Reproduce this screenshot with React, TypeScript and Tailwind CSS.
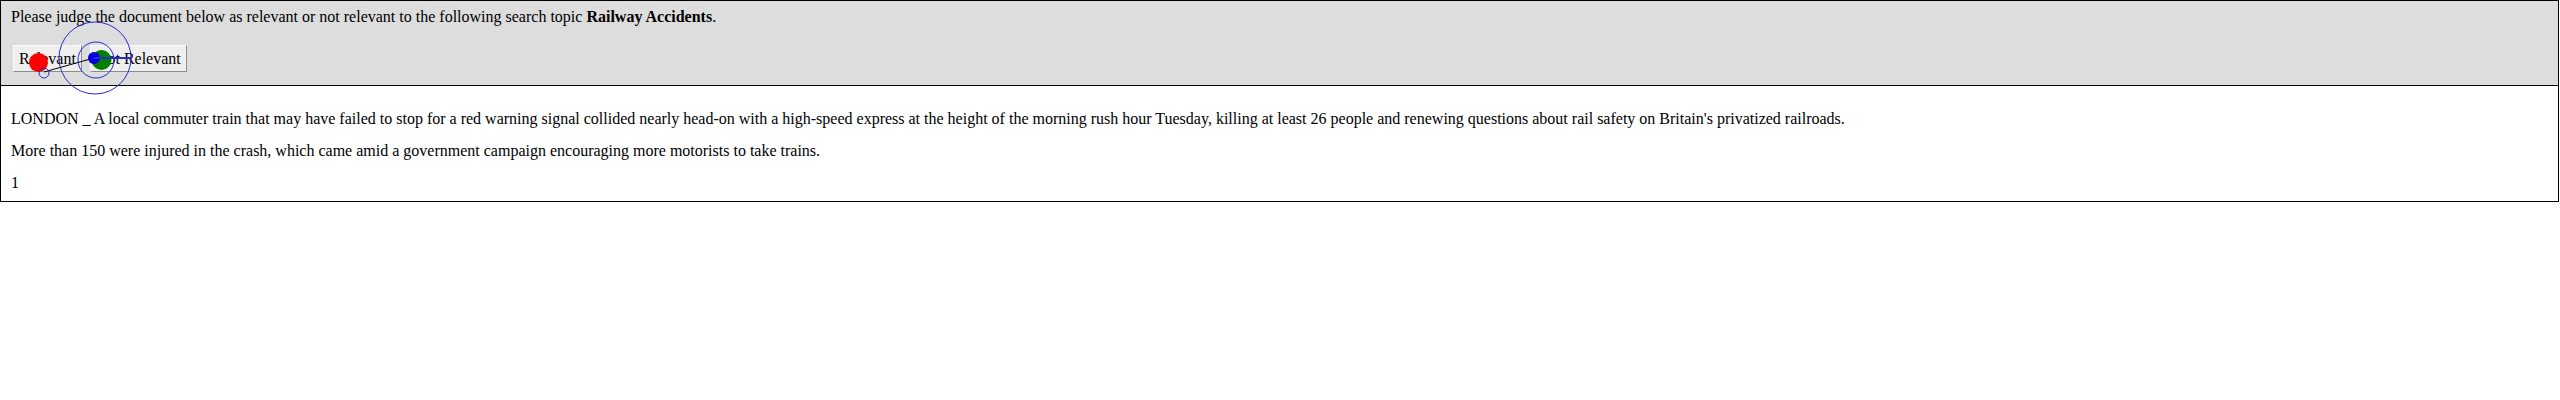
import React from "react";

export default function App() {
  return (
    <div className="relative w-[2559px] font-['Liberation_Serif',serif] text-[16px] leading-[18px] text-black">
      <div className="border border-black">
        <div className="bg-[#dddddd] border-b border-black pl-[10px] pt-[7px] pb-[13px]">
          <div>
            Please judge the document below as relevant or not relevant to the following search topic{" "}
            <b>Railway Accidents</b>.
          </div>
          <div className="mt-[19px] ml-[2px] flex gap-[8px]">
            <button className="h-[27px] px-[5px] bg-[#efefef] border border-t-[#fafafa] border-l-[#fafafa] border-b-[#8c8c8c] border-r-[#8c8c8c] font-['Liberation_Serif',serif] text-[16px] leading-[18px]">
              Relevant
            </button>
            <button className="h-[27px] px-[5px] bg-[#efefef] border border-t-[#fafafa] border-l-[#fafafa] border-b-[#8c8c8c] border-r-[#8c8c8c] font-['Liberation_Serif',serif] text-[16px] leading-[18px]">
              Not Relevant
            </button>
          </div>
        </div>
        <div className="bg-white pl-[10px] pt-[24px] pb-[9px] flex flex-col gap-[14px]">
          <p>
            LONDON _ A local commuter train that may have failed to stop for a red warning signal collided nearly head-on with a high-speed express at the height of the morning rush hour Tuesday, killing at least 26 people and renewing questions about rail safety on Britain's privatized railroads.
          </p>
          <p>
            More than 150 were injured in the crash, which came amid a government campaign encouraging more motorists to take trains.
          </p>
          <p>1</p>
        </div>
      </div>
      <svg
        className="absolute left-0 top-0 pointer-events-none overflow-visible"
        width="200"
        height="110"
        viewBox="0 0 200 110"
      >
        <circle cx="95" cy="58" r="36" fill="none" stroke="#2b2bd0" strokeWidth="1" />
        <circle cx="96" cy="60" r="18" fill="none" stroke="#2b2bd0" strokeWidth="1" />
        <circle cx="101.5" cy="60" r="10" fill="#008000" />
        <line x1="44" y1="72" x2="94" y2="58" stroke="#000" strokeWidth="1" />
        <circle cx="94" cy="58" r="6" fill="#0000e0" />
        <line x1="94" y1="58" x2="132" y2="58" stroke="#2b2bd0" strokeWidth="2" />
        <circle cx="38.5" cy="62.5" r="9.5" fill="#ff0000" />
        <circle cx="44" cy="73" r="5" fill="none" stroke="#2b2bd0" strokeWidth="1" />
      </svg>
    </div>
  );
}
